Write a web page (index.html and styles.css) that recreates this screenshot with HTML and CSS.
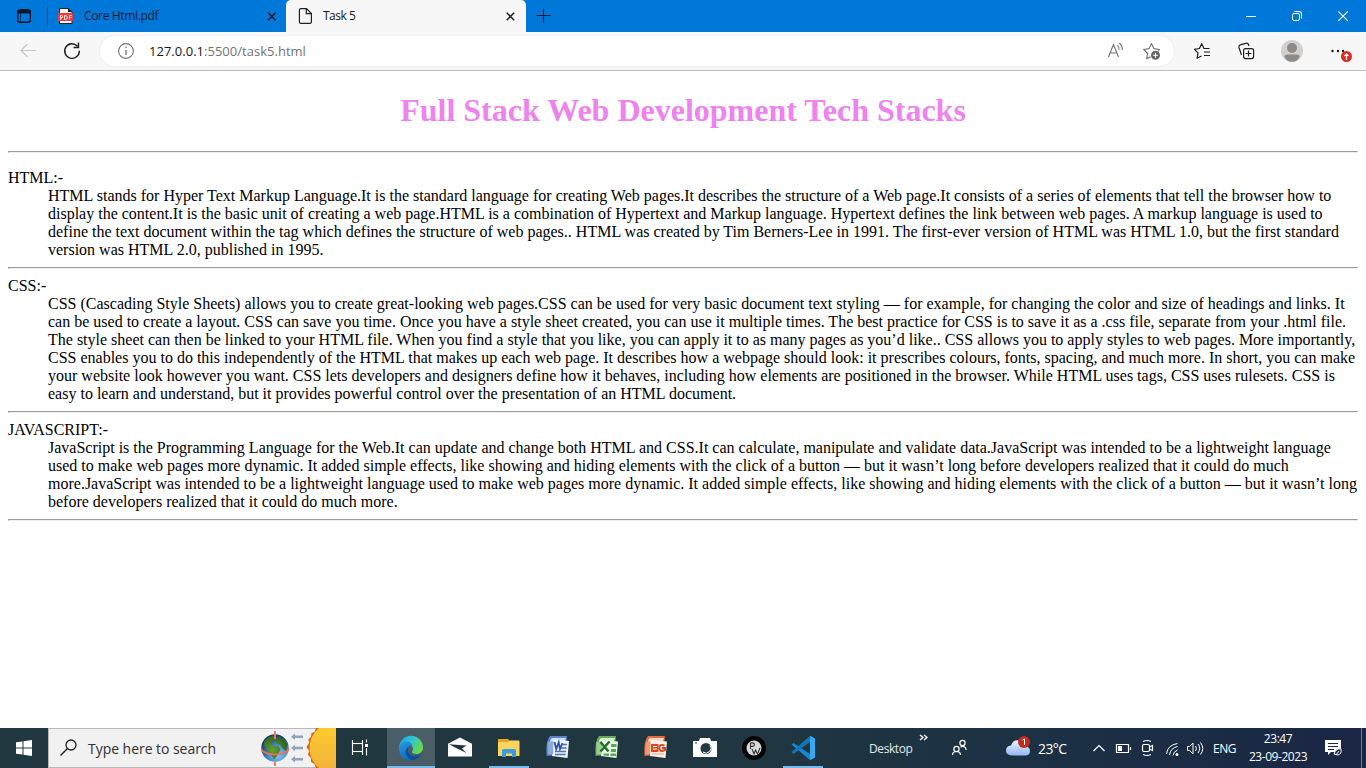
FILE: index.html
```html
<!DOCTYPE html>
<html lang="en">
<head>
<meta charset="utf-8">
<title>Task 5</title>
<link rel="stylesheet" href="styles.css">
</head>
<body>
<div class="desktop">
  <header class="tabs">
    <svg class="tab-actions" width="48" height="32" viewBox="0 0 48 32"><rect x="17.700" y="10" width="12.600" height="12.300" rx="2" fill="none" stroke="#06192b" stroke-width="1.400"/><path d="M17 12q0-2.600 2.500-2.600h9q2.500 0 2.500 2.600v1.500H17z" fill="#06192b"/><path d="M20.500 13v9" stroke="#06192b" stroke-width=".8"/><path d="M47.500 7v19" stroke="#06438a"/></svg>
    <div class="tab">
      <svg width="36" height="32" viewBox="48 0 36 32"><path d="M59.500 8.500h9l3.500 3.500v11.500H59.500z" fill="#fff" stroke="#222"/><path d="M68 8v4h4z" fill="#222"/><rect x="58" y="13" width="15" height="8" rx="1" fill="#f4373d"/><path d="M60.500 19.500v-4h1.500q1.500 1.200 0 2.400h-1.500M64.500 15.500v4q3 0 3-2t-3-2M69.500 19.500v-4h2.300M69.500 17.500h2" fill="none" stroke="#fff" stroke-width=".9"/></svg>
      <span class="tab-name tab-name-pdf">Core Html.pdf</span>
      <svg width="30" height="32" viewBox="256 0 30 32"><path d="m268 12.700 7.500 7.500m0-7.500-7.500 7.500" stroke="#03182a" stroke-width="1.500"/></svg>
    </div>
    <div class="tab active">
      <svg width="37" height="32" viewBox="286 0 37 32"><path d="M301 8.600h5.500l4.900 4.900v8.300q0 1.600-1.600 1.600H301q-1.600 0-1.600-1.600V10.200q0-1.600 1.600-1.600zM306.300 9v4.700h4.700" fill="none" stroke="#202020" stroke-width="1.200"/></svg>
      <span class="tab-name">Task 5</span>
      <svg width="30" height="32" viewBox="496 0 30 32"><path d="m506.700 12.700 7.500 7.500m0-7.500-7.500 7.500" stroke="#202020" stroke-width="1.500"/></svg>
    </div>
    <svg width="40" height="32" viewBox="526 0 40 32"><path d="M536.500 15.500h14M543.500 8.500v14" stroke="#041b30" stroke-width="1.100"/></svg>
    <svg class="window-controls" width="138" height="32" viewBox="1228 0 138 32"><g fill="none" stroke="#fff"><path d="M1246 16.500h10"/><rect x="1292.500" y="13.500" width="7" height="7" rx="1.500"/><path d="M1294.500 11.500h4.500q2.500 0 2.500 2.500v4.500M1338.300 11.300l9.500 9.500m0-9.500-9.500 9.500" stroke-width="1.100"/></g></svg>
  </header>

  <nav class="toolbar">
    <svg width="100" height="38" viewBox="0 32 100 38"><path d="M36 50.500H21m6.500-6.500-6.500 6.500 6.500 6.500" fill="none" stroke="#c6c6c6" stroke-width="1.200"/><path d="M77.500 46.200a7.300 7.300 0 1 0 1.800 4.500M78.500 42.500v5h-5" fill="none" stroke="#1d1d1d" stroke-width="1.400"/></svg>
    <div class="address">
      <svg width="49" height="30" viewBox="100 36 49 30"><circle cx="126" cy="51" r="7.400" fill="none" stroke="#717171" stroke-width="1.100"/><path d="M126 50v5M126 46.500v1.500" stroke="#717171" stroke-width="1.300"/></svg>
      <span class="url">127.0.0.1<span class="path">:5500/task5.html</span></span>
      <svg class="address-icons" width="75" height="30" viewBox="1099 36 75 30"><g fill="none" stroke="#707070" stroke-width="1.100"><path d="m1108.500 57 5-12.500 5 12.500M1110.300 53h6.500M1117.500 45.300q2 2 1.500 4.500M1119.300 43q3.500 3 2.900 7"/><path d="m1158 51.500 1.500-2-5.700-.9-2.300-5-2.400 5-5.400.9 3.900 4-.9 5.200 4-2" stroke-linejoin="round"/></g><circle cx="1155.500" cy="55.300" r="4.500" fill="#656565"/><path d="M1153 55.300h5m-2.500-2.500v5" stroke="#fff"/></svg>
    </div>
    <svg width="192" height="38" viewBox="1174 32 192 38">
      <g fill="none" stroke="#1d1d1d" stroke-width="1.200"><path d="m1209.500 48.500h-5.500l-2.300-4.800-2.300 4.800-5 .8 3.600 3.600-.9 5.300 4.400-2.200M1204 52h6M1204 55.500h6" stroke-linejoin="round"/><rect x="1243.600" y="48.600" width="10" height="10" rx="2"/><path d="M1248.500 50.500v6M1245.500 53.500h6M1241.500 55l-2.500-7.500q-.5-2 1.200-2.700l5.800-1.500q1.800-.4 2.500 1.200l.4 1.500"/></g>
      <circle cx="1292" cy="51" r="11" fill="#d2d0ce"/><circle cx="1292" cy="48" r="5" fill="#8c8986"/><path d="M1284.500 56.500q0-2 2.500-2h10q2.500 0 2.500 2-2 5.300-7.500 5.300t-7.500-5.300z" fill="#8c8986"/>
      <g fill="#111"><circle cx="1332.500" cy="51" r="1.200"/><circle cx="1338" cy="51" r="1.200"/><circle cx="1343" cy="51" r="1.200"/></g><circle cx="1346.500" cy="56.500" r="5.500" fill="#d92c24"/><path d="M1346.500 60v-6m-2 2 2-2 2 2" fill="none" stroke="#fff" stroke-width="1.200"/>
    </svg>
  </nav>

  <main class="page">
    <h1>Full Stack Web Development Tech Stacks</h1>
    <hr>
    <dl>
      <dt>HTML:-</dt>
      <dd>HTML stands for Hyper Text Markup Language.It is the standard language for creating Web pages.It describes the structure of a Web page.It consists of a series of elements that tell the browser how to<br>display the content.It is the basic unit of creating a web page.HTML is a combination of Hypertext and Markup language. Hypertext defines the link between web pages. A markup language is used to<br>define the text document within the tag which defines the structure of web pages.. HTML was created by Tim Berners-Lee in 1991. The first-ever version of HTML was HTML 1.0, but the first standard<br>version was HTML 2.0, published in 1995.</dd>
      <hr>
      <dt>CSS:-</dt>
      <dd>CSS (Cascading Style Sheets) allows you to create great-looking web pages.CSS can be used for very basic document text styling — for example, for changing the color and size of headings and links. It<br>can be used to create a layout. CSS can save you time. Once you have a style sheet created, you can use it multiple times. The best practice for CSS is to save it as a .css file, separate from your .html file.<br>The style sheet can then be linked to your HTML file. When you find a style that you like, you can apply it to as many pages as you’d like.. CSS allows you to apply styles to web pages. More importantly,<br>CSS enables you to do this independently of the HTML that makes up each web page. It describes how a webpage should look: it prescribes colours, fonts, spacing, and much more. In short, you can make<br>your website look however you want. CSS lets developers and designers define how it behaves, including how elements are positioned in the browser. While HTML uses tags, CSS uses rulesets. CSS is<br>easy to learn and understand, but it provides powerful control over the presentation of an HTML document.</dd>
      <hr>
      <dt>JAVASCRIPT:-</dt>
      <dd>JavaScript is the Programming Language for the Web.It can update and change both HTML and CSS.It can calculate, manipulate and validate data.JavaScript was intended to be a lightweight language<br>used to make web pages more dynamic. It added simple effects, like showing and hiding elements with the click of a button — but it wasn’t long before developers realized that it could do much<br>more.JavaScript was intended to be a lightweight language used to make web pages more dynamic. It added simple effects, like showing and hiding elements with the click of a button — but it wasn’t long<br>before developers realized that it could do much more.</dd>
      <hr>
    </dl>
  </main>

  <footer class="taskbar">
    <svg width="48" height="40" viewBox="0 728 48 40"><path d="m16 742.300 6.500-.9v6.100H16zM23.500 741.200l8.500-1.200v7.500h-8.500zM16 748.500h6.500v6.100l-6.500-.9zM23.500 748.500H32v7.500l-8.500-1.200z" fill="#fff"/></svg>
    <div class="search">
      <svg width="39" height="38" viewBox="49 729 39 38"><circle cx="71" cy="745" r="5" fill="none" stroke="#222" stroke-width="1.300"/><path d="m67.500 748.500-7 7" stroke="#222" stroke-width="1.400"/></svg>
      <span class="search-text">Type here to search</span>
      <svg class="search-art" width="86" height="40" viewBox="250 728 86 40">
        <defs><radialGradient id="sea" cx=".62" cy=".75" r=".7"><stop stop-color="#86c2fa"/><stop offset=".5" stop-color="#4a8fd0"/><stop offset="1" stop-color="#123e68"/></radialGradient><radialGradient id="land" cx=".4" cy=".6" r=".7"><stop stop-color="#64a12c"/><stop offset="1" stop-color="#28591c"/></radialGradient><linearGradient id="sun" x2="0" y2="1"><stop stop-color="#fccb2f"/><stop offset="1" stop-color="#f3b33a"/></linearGradient></defs>
        <path d="M275 731v8" stroke="#f0604a" stroke-width="2"/><circle cx="275" cy="748" r="13.700" fill="url(#sea)"/>
        <path d="M264.500 741q3-4 8.500-5.500l3 1.500-1 3-3.500 1-1 3 4 2 4 .5 2 3-2.500 5-4 5-3-5-4-3-.5-4-3-2zM278 736.500q6 1.500 9 7.500l-.5 7-3.500-2-3-4.500-4-1-1-3z" fill="url(#land)"/>
        <path d="M261.200 748.500q1 5.500 13.800 6 12.800-.5 13.800-6" fill="none" stroke="#f46d4e" stroke-width="1.500"/><path d="M275 731v8M275 761.500v4.500" stroke="#f57a61" stroke-width="2"/>
        <path d="M291 736.800l4-3.300v2h8v2.600h-8v2zM291 748l4-3.300v2h8v2.600h-8v2zM291 759.200l4-3.300v2h8v2.600h-8v2z" fill="#91a4bd"/>
        <path d="M336 728h-20l-1.500 4-3 1-.5 4-2.500 2 .5 4-2.500 4 2.500 4-1 4 3 3v4l3.500 2 1.500 4h20z" fill="#e0650f"/><path d="M336 728h-17q-9.500 8-9.500 20t9.500 20h17z" fill="url(#sun)"/>
      </svg>
    </div>
    <svg width="51" height="40" viewBox="336 728 51 40"><g fill="none" stroke="#fff" stroke-width="1.100"><path d="M352.500 740v3.500h10V740M352.500 755v-3.500h10v3.500"/><rect x="352.500" y="743.500" width="10" height="8"/><path d="M366.500 739.500v3M366.500 748v7.500"/></g><path d="M365 744h3v3h-3z" fill="#fff"/></svg>
    <svg class="edge" width="48" height="40" viewBox="387 728 48 40">
      <defs><linearGradient id="wave" x2="1" y2=".5"><stop stop-color="#238fdf"/><stop offset=".45" stop-color="#2cc0df"/><stop offset="1" stop-color="#66d852"/></linearGradient><linearGradient id="base" x2=".7" y2="1"><stop stop-color="#209be8"/><stop offset="1" stop-color="#1260b5"/></linearGradient></defs>
      <path d="M399 748a12 12 0 0 1 24-.5c0 4-3 6.500-6.500 6.500-3 0-4.500-1-4.500-2 0-.8 1-1.200 1-3 0-2.500-2.500-4.500-5.500-4.500-4 0-7.500 1.500-8.500 3.500z" fill="url(#wave)"/>
      <path d="M399 748q1-5.500 6.500-6.500 6-.5 7.500 5.500-1.500-2-3.500-1-2.500 1.500-1.500 5 1.500 5 7 5 3 0 6.500-2-3.500 6-10.500 6-12 0-12-12z" fill="url(#base)"/>
      <path d="M409.500 746q-3.500 1.500-4 5.500 0 5 5.500 8.500 7 0 10.500-6-3.500 2-6.500 2-5.500 0-7-5-1-3.500 1.500-5z" fill="#104f99"/>
      <path d="M387 766h48v2h-48z" fill="#76b9ed"/></svg>
    <svg width="50" height="40" viewBox="435 728 50 40"><path d="m448 743.800 12-6.300 12 6.300v12.700h-24z" fill="#fff"/><path d="m449 744.300 17.500 1.200-4.500 3 4.500 4.500-9.500-4.500z" fill="#20353f"/></svg>
    <svg width="48" height="40" viewBox="485 728 48 40"><path d="M498 739h10l2 2h9v15h-21z" fill="#e7a31b"/><path d="M498 742h10l2-1.500h8.500q1 0 1 1V756H498z" fill="#ffd35e"/><path d="M502 757v-6.500q0-1.500 1.500-1.500h11q1.500 0 1.500 1.500v6.500h-4v-3.500h-6v3.500z" fill="#399ddd"/><path d="M489 766h40v2h-40z" fill="#76b9ed"/></svg>
    <svg width="49" height="40" viewBox="533 728 49 40">
      <path d="M550 736h17l-2 18-18.500 2q-1-15 3.500-20z" fill="#5d82c7"/><path d="M552 738h14l-1 3-15 1q0-3 2-4z" fill="#cfddf4"/><path d="m553 739 16 2-1.500 17-15.500-2z" fill="#eef4fe"/><path d="m547.500 742 6-.5-.5 13h-5z" fill="#8ca9de"/><path d="m554.500 742 1.700 7 2.500-6.500 1.300 6.500 2.500-6" fill="none" stroke="#3157a6" stroke-width="1.900"/><path d="M562 744.500h5M561 748h5.500M555 751.500h11M555 754.500h10.500" stroke="#4c6fb5" stroke-width="1.400"/></svg>
    <svg width="49" height="40" viewBox="582 728 49 40">
      <path d="M599 736h17l-2 18-18.500 2q-1-15 3.500-20z" fill="#61ac59"/><path d="M601 738h14l-1 3-15 1q0-3 2-4z" fill="#d9f1d2"/><path d="m602 740 16 1.500-1.500 16.500-15.500-2z" fill="#eef8ea"/><path d="m596.500 742 5-.5v13h-5z" fill="#9bcc91"/><path d="M611 744h5.500v3H611zM611 749h5v3h-5zM603.500 753.500h5.500v2.500l-5.500-.5zM610.500 753.500h5.500v2.500h-5.500z" fill="#55a955"/><path d="m600.500 742 8 9.500m1-10-9 10" stroke="#22722c" stroke-width="2.600"/></svg>
    <svg width="49" height="40" viewBox="631 728 49 40">
      <path d="M648 736h17l-2 18-18.500 2q-1-15 3.500-20z" fill="#e66b3d"/><path d="M650 738h14l-1 3-15 1q0-3 2-4z" fill="#f9d8ca"/><path d="m650.500 740 16.500 1.500-1.500 16.500-15.500-2z" fill="#fff1ea"/><path d="m646 742 4-.5v13h-5z" fill="#ee9975"/><path d="M651 744h7.500v8H651z" fill="#d84b1e"/><path d="M653 746.500h4M653 749h4" stroke="#fff"/><path d="M664.500 745.500q-5-2-5.200 2.500.2 4.500 5.700 2v-2h-3" fill="none" stroke="#d84b1e" stroke-width="2"/><path d="M652 754h12" stroke="#f1a17f"/></svg>
    <svg width="49" height="40" viewBox="680 728 49 40"><path d="M693 741h6l1-3h10l1 3h6v16h-24z" fill="#fff"/><circle cx="706" cy="748.500" r="5.500" fill="#223943"/><path d="M703 752a5 5 0 0 0 7-7" stroke="#fff" fill="none"/><path d="M695 743h2" stroke="#223943"/></svg>
    <svg width="49" height="40" viewBox="729 728 49 40"><circle cx="754" cy="748" r="12" fill="#050505"/><circle cx="754" cy="748" r="7.500" fill="#d9d9d9"/><path d="M750.500 749v-6q4-.5 4 1.500t-4 2M752 749l2 5 1.500-4 2 4 2.500-6" fill="none" stroke="#333" stroke-width="1.100"/></svg>
    <svg width="50" height="40" viewBox="778 728 50 40"><path d="m810 736 5 2.500v19l-5 2.500-18.500-15.500 2-1.500 16.500 11z" fill="#168bd3"/><path d="m810 736 5 2.500v19l-5 2.500z" fill="#39a7ee"/><path d="m810 736-18.500 16 2 2L810 742z" fill="#1176b7"/><path d="M783 766h40v2h-40z" fill="#76b9ed"/></svg>
    <span class="desktop-label">Desktop</span>
    <svg width="126" height="40" viewBox="912 728 126 40">
      <path d="m920 735 3 2.500-3 2.500m4-5 3 2.500-3 2.500" fill="none" stroke="#fff" stroke-width="1.300"/>
      <g fill="none" stroke="#fff" stroke-width="1.200"><circle cx="962.500" cy="743" r="2.600"/><circle cx="956.500" cy="749" r="2.600"/><path d="M952.500 755q0-3.500 4-3.500t4 3.500M960.500 747q5-2 5.700 3"/></g>
      <defs><linearGradient id="cloud" y2="1" x2="0"><stop stop-color="#edf4ff"/><stop offset="1" stop-color="#92b7f3"/></linearGradient></defs><path d="M1012 755.500q-6-.5-6-5t5-5q2-6 8-5 5 1 6 6 5 0 5 4.500t-5 4.500z" fill="url(#cloud)"/><circle cx="1024" cy="742" r="6" fill="#c42b1c"/><path d="m1022.500 740 2-1v6" fill="none" stroke="#fff"/>
    </svg>
    <span class="temp">23°C</span>
    <svg class="tray" width="130" height="40" viewBox="1083 728 130 40"><g fill="none" stroke="#fff" stroke-width="1.200"><path d="m1093.500 751 5.500-5.500 5.500 5.500"/><path d="M1116.500 744.500h12v8h-12zM1130.500 747v3"/><rect x="1142.500" y="744.500" width="7" height="7" rx="1.500"/><path d="m1149.500 747 3-1.500v5l-3-1.500M1143 741.500q4-2 8 0M1143 754.500q4 2 8 0"/><path d="M1166.500 754q1-9 11-10.500M1169.500 755q1-7 8-8.500M1173 755.500q.5-4 4.500-5.500" stroke-width="1"/><path d="M1187.500 746.500h2l3.500-3.500v11l-3.500-3.500h-2zM1195.500 746q2 2 0 5M1198 744q3.500 4 0 9M1200.500 742.500q4.500 6 0 12" stroke-width="1"/></g><path d="M1118 746h4v5h-4z" fill="#fff"/><circle cx="1177" cy="754.500" r="1.500" fill="#fff"/></svg>
    <span class="lang">ENG</span>
    <div class="clock"><span class="time">23:47</span><span class="date">23-09-2023</span></div>
    <svg width="55" height="40" viewBox="1311 728 55 40"><path d="M1325 740h16v12h-10l-3 3v-3h-3z" fill="#fff"/><path d="M1328 743.500h10M1328 746.500h10M1328 749.500h6" stroke="#1a2842"/><path d="M1334 754q2-6 7-5 1 5-3 6zM1336 755l3-4" fill="#1a2842" stroke="#fff"/><path d="M1361.500 728v40" stroke="#79818f"/></svg>
  </footer>
</div>
</body>
</html>
```

FILE: styles.css
```css
body { margin: 0; overflow: hidden; background: #fff; }
svg { display: block; flex: none; }
.desktop { width: 1366px; height: 768px; display: flex; flex-direction: column; }
.tabs { height: 32px; flex: none; display: flex; background: #0078d9; font-family: "Open Sans", "Noto Sans", sans-serif; }
.tab { width: 238px; height: 32px; display: flex; align-items: center; }
.tab.active { width: 240px; background: #f7f7f7; border-radius: 5px 5px 0 0; }
.tab-name { flex: 1; font-size: 12px; line-height: 32px; letter-spacing: -0.35px; white-space: nowrap; color: #171717; }
.tab.active .tab-name { letter-spacing: -0.6px; }
.tab-name-pdf { color: #061a2e; }
.tab.active .tab-name { letter-spacing: -0.5px; }
.window-controls { margin-left: auto; }
.toolbar { box-sizing: border-box; height: 39px; flex: none; display: flex; background: #f7f7f7; border-bottom: 1px solid #bdbdbd; }
.address { margin-top: 4px; width: 1074px; height: 30px; display: flex; background: #fff; border-radius: 15px; box-shadow: 0 0 3px #e7e7e7; }
.url { font: 13px/30px "Open Sans", "Noto Sans", sans-serif; color: #181818; letter-spacing: 0.02px; white-space: nowrap; }
.path { color: #737373; }
.address-icons { margin-left: auto; }
.page { flex: 1; min-height: 0; padding: 0 8px; display: flow-root; font: 16px/18px "Liberation Serif", "Times New Roman", serif; color: #000; }
.page h1 { margin: 21.44px 0; font-size: 32px; line-height: 37px; font-weight: 700; text-align: center; color: violet; }
.page hr { margin: 8px 0; }
.page h1 + hr { margin: 0; }
.page dl { margin: 16px 0 0; }
.page dd { margin-left: 40px; white-space: nowrap; }
.taskbar { height: 40px; flex: none; display: flex; align-items: center; background: linear-gradient(90deg, #20373f 0%, #203640 55%, #1c3045 78%, #1a2644 100%); color: #fff; font-family: "Open Sans", "Noto Sans", sans-serif; font-size: 12px; white-space: nowrap; }
.search { box-sizing: border-box; width: 288px; height: 40px; display: flex; align-items: center; background: #f1f1f1; border: 1px solid #b8b8b8; border-right: 0; }
.search-text { font-size: 14px; letter-spacing: -0.04px; color: #303030; }
.search-art { margin-left: auto; }
.edge { background: #4c5e65; }
.desktop-label { width: 43px; margin-left: 41px; letter-spacing: -0.4px; color: #e3e7e9; }
.temp { width: 45px; font-size: 14px; letter-spacing: -0.6px; }
.lang { width: 32px; letter-spacing: -0.5px; }
.clock { width: 66px; display: flex; flex-direction: column; align-items: center; line-height: 18px; letter-spacing: -0.45px; }
```
